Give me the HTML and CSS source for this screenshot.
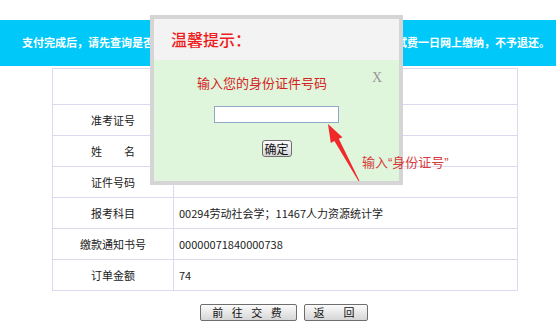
FILE: index.html
```
<!DOCTYPE html>
<html lang="zh-CN">
<head>
    <meta charset="UTF-8">
    <meta name="viewport" content="width=device-width, initial-scale=1.0">
    <title>网上缴费</title>
    <link rel="stylesheet" href="styles.css">
</head>
<body>
    <div class="banner">支付完成后，请先查询是否缴费成功，切勿重复支付，如已重复支付的报名考试费一日网上缴纳，不予退还。</div>

    <table class="info">
        <tr class="head">
            <td colspan="2"></td>
        </tr>
        <tr>
            <td class="label">准考证号</td>
            <td class="value"></td>
        </tr>
        <tr>
            <td class="label">姓　　名</td>
            <td class="value"></td>
        </tr>
        <tr>
            <td class="label">证件号码</td>
            <td class="value"></td>
        </tr>
        <tr>
            <td class="label">报考科目</td>
            <td class="value">00294劳动社会学；11467人力资源统计学</td>
        </tr>
        <tr>
            <td class="label">缴款通知书号</td>
            <td class="value">00000071840000738</td>
        </tr>
        <tr>
            <td class="label">订单金额</td>
            <td class="value">74</td>
        </tr>
    </table>

    <div class="actions">
        <button class="btn btn-pay">前 往 交 费</button>
        <button class="btn btn-back">返　回</button>
    </div>

    <!-- popup asking for the id number -->
    <div class="dialog">
        <div class="dialog-title">温馨提示：</div>
        <div class="dialog-body">
            <div class="prompt">
                <span>输入您的身份证件号码</span>
                <span class="close">X</span>
            </div>
            <input type="text" class="id-input">
            <button class="ok">确定</button>
        </div>
    </div>

    <svg class="arrow" width="45" height="70" viewBox="320 118 45 70">
        <polygon points="328,124 342.4,137.2 338.8,138.8 359.4,180.8 358.6,181.2 334.4,141.0 330.8,142.9" fill="#f0282a"/>
    </svg>
    <div class="note">输入“身份证号”</div>
</body>
</html>
```
FILE: styles.css
```
body {
    margin: 0;
    background: #fff;
    font-family: "Noto Sans CJK SC", sans-serif;
    position: relative;
    width: 556px;
    height: 330px;
    overflow: hidden;
}
.banner {
    margin-top: 20px;
    height: 46px;
    line-height: 44px;
    background: #00c9f9;
    color: #fff;
    font-size: 11px;
    font-weight: bold;
    padding-left: 22px;
    white-space: nowrap;
    overflow: hidden;
}
.info {
    margin: 2px 0 0 52px;
    width: 466px;
    border-collapse: collapse;
    font-size: 11px;
    color: #222;
}
.info td {
    border: 1px solid #dcd9f0;
    padding: 0;
    height: 30px;
}
.info .head td {
    height: 35px;
}
.info .label {
    width: 120px;
    text-align: center;
    white-space: pre;
}
.info .value {
    padding-left: 5px;
}
.actions {
    margin-top: 13px;
    display: flex;
    justify-content: center;
    gap: 7px;
    padding-left: 12px;
}
.btn {
    height: 17px;
    padding: 0;
    border: 1px solid #6e6e6e;
    border-radius: 2px;
    background: linear-gradient(#fbfbfb, #d6d6d6);
    font-family: "Noto Sans CJK SC", sans-serif;
    font-size: 11px;
    line-height: 15px;
    color: #111;
}
.btn-pay {
    width: 97px;
    letter-spacing: 3px;
}
.btn-back {
    width: 64px;
    letter-spacing: 4px;
}
.dialog {
    position: absolute;
    left: 150px;
    top: 15px;
    width: 245px;
    height: 162px;
    border: 4px solid #d5d5d5;
    background: #dff5dc;
}
.dialog-title {
    height: 41px;
    line-height: 41px;
    background: #f3f3f3;
    color: #ee1c1c;
    font-size: 16px;
    font-weight: 500;
    padding-left: 17px;
}
.dialog-body {
    display: flex;
    flex-direction: column;
    align-items: center;
    padding-top: 13px;
}
.prompt {
    align-self: stretch;
    display: flex;
    align-items: center;
    padding: 0 17px 0 43px;
    height: 18px;
    color: #d42222;
    font-size: 13px;
}
.close {
    margin-left: auto;
    margin-top: -8px;
    color: #999;
    font-family: "Liberation Serif", serif;
    font-size: 14px;
}
.id-input {
    box-sizing: border-box;
    margin-top: 15px;
    width: 125px;
    height: 17px;
    border: 1px solid #8ea8c6;
    background: #fff;
    padding: 0;
}
.ok {
    margin-top: 17px;
    width: 30px;
    height: 17px;
    padding: 0;
    border: 1px solid #6e6e6e;
    border-radius: 3px;
    background: linear-gradient(#fafafa, #d8d8d8);
    font-family: "Noto Sans CJK SC", sans-serif;
    font-size: 12px;
    line-height: 15px;
    color: #111;
}
.arrow {
    position: absolute;
    left: 320px;
    top: 118px;
}
.note {
    position: absolute;
    left: 362px;
    top: 154px;
    color: #d63a3a;
    font-family: "Liberation Sans", "Noto Sans CJK SC", sans-serif;
    font-size: 13px;
    line-height: 18px;
    white-space: nowrap;
}
```
